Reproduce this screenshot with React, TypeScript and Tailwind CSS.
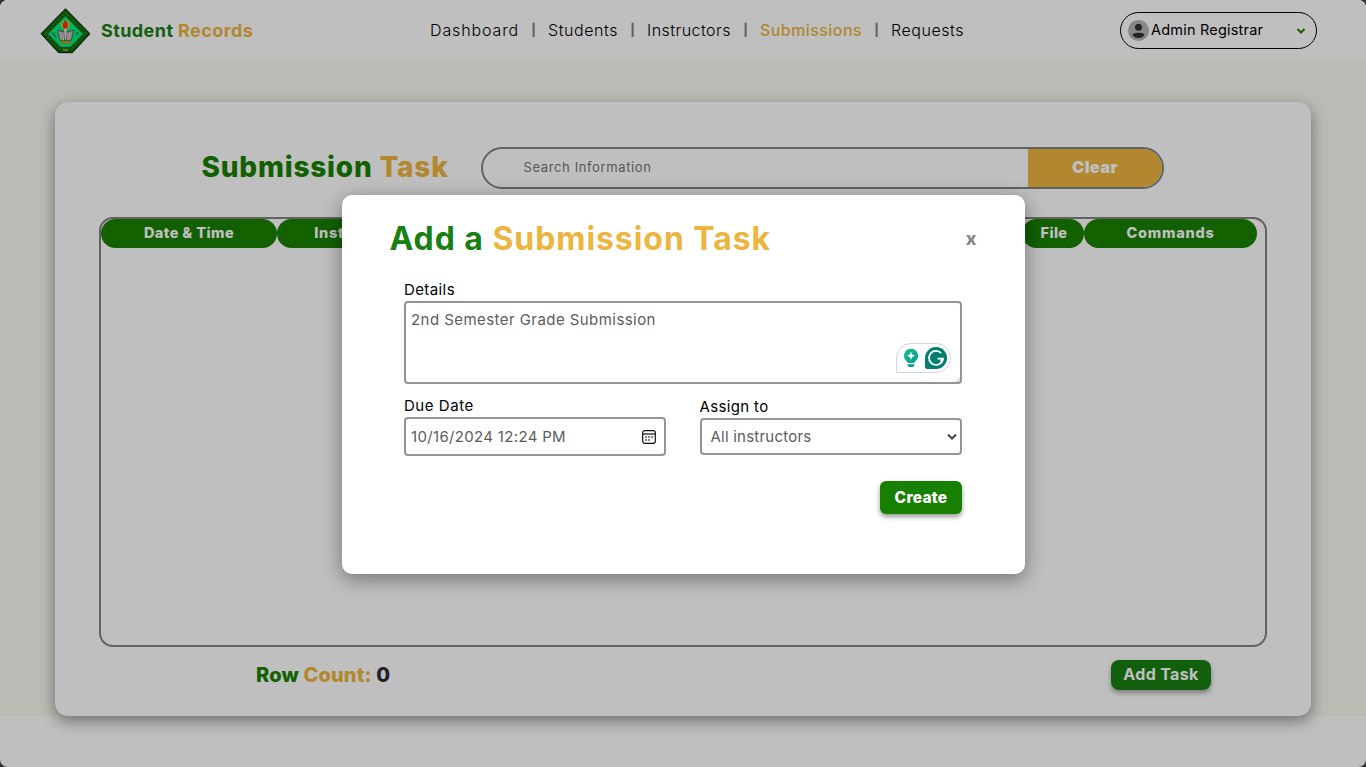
import React from "react";

function Logo() {
  return (
    <svg width="50" height="46" viewBox="-.5 -.2 50 46" className="shrink-0">
      <path d="M25 .5 49.5 25.500 32 44.500H18L.5 25.500Z" fill="#0a6b0a" stroke="#151515" strokeWidth="1" />
      <path d="M25 4.500 45.500 25.500 31 40.800H19L4.500 25.500Z" fill="none" stroke="#c8b400" strokeWidth="1.100" strokeDasharray="1.2 2.2" opacity=".5" />
      <path d="M25 7.500 43 25.700 29.800 39.200H20.200L7 25.700Z" fill="#00f07c" stroke="#2a4a3a" strokeWidth="1" />
      <path d="m17 22 7 2v9l-5-1.500ZM33 22l-7 2v9l5-1.500Z" fill="#d8d8cc" stroke="#3c3c3c" strokeWidth=".8" />
      <path d="M19.500 23v8M21.700 23.700v8M28.300 23.700v8M30.500 23v8" stroke="#777" strokeWidth=".6" />
      <path d="M23 20h4l-1 12h-2Z" fill="#d6d6d6" stroke="#555" strokeWidth=".5" />
      <circle cx="25" cy="16.500" r="4.500" fill="#f0c020" opacity=".85" />
      <path d="M25 12c2.500 2 3 5 1.800 8h-3.600C21.500 17 22.500 14 25 12Z" fill="#e8340c" />
      <path d="M19.500 32.200q5.500 2.400 11 0l-1 2.800h-9Z" fill="#e0a818" stroke="#7a5c00" strokeWidth=".4" />
      <path d="m11 24 5 6M12 27l2-3M14 29l1-3" stroke="#2c6a4a" strokeWidth=".9" fill="none" />
      <path d="m35 27 3-3M36 24l2 3" stroke="#2c6a4a" strokeWidth=".9" fill="none" />
      <path d="M22.500 42h5" stroke="#d6b820" strokeWidth="1.200" />
    </svg>
  );
}

function Separator() {
  return <span className="w-[29px] text-center text-[12px] font-extrabold text-[#858585]">|</span>;
}

function Header() {
  return (
    <header className="flex h-[61px] shrink-0 items-center bg-white pl-[40px] pr-[49px] leading-none">
      <div className="flex w-[390px] items-center gap-[11px] pt-px">
        <Logo />
        <span className="whitespace-nowrap pb-px text-[18px] font-bold tracking-[0.42px] text-[#188012]">
          Student <span className="text-[#ecb53f]">Records</span>
        </span>
      </div>
      <nav className="flex items-center whitespace-nowrap pb-[2px] text-[16px] font-light text-black">
        <span className="w-[89px] tracking-[0.87px]">Dashboard</span>
        <Separator />
        <span className="w-[70px] tracking-[0.56px]">Students</span>
        <Separator />
        <span className="w-[84px] tracking-[0.46px]">Instructors</span>
        <Separator />
        <span className="w-[102px] font-medium tracking-[0.43px] text-[#ecb53f]">Submissions</span>
        <Separator />
        <span className="w-[73px] tracking-[0.54px]">Requests</span>
      </nav>
      <div className="ml-auto flex h-[37px] w-[197px] items-center rounded-full border border-black pl-[7px] pr-[10px]">
        <svg width="21" height="21" viewBox="0 0 21 21">
          <circle cx="10.500" cy="10.500" r="10.500" fill="#b4b4b4" />
          <circle cx="10.500" cy="7.300" r="3.500" fill="#333" />
          <path d="M4.700 15c0-3 11.600-3 11.600 0-.8 1.800-3 3-5.800 3s-5-1.200-5.800-3Z" fill="#333" />
        </svg>
        <span className="ml-[2px] text-[14.5px] tracking-[0.2px] text-black">Admin Registrar</span>
        <svg width="10" height="8" viewBox="0 0 10 8" className="ml-auto">
          <path d="m1.500 2 3.500 3.500L8.500 2" fill="none" stroke="#188000" strokeWidth="2" />
        </svg>
      </div>
    </header>
  );
}

function SearchBar() {
  return (
    <div className="flex h-[42px] w-[683px] overflow-hidden rounded-full border-2 border-[#838383] bg-white">
      <div className="flex flex-1 items-center pb-[2px] pl-[40.5px] text-[13px] tracking-[0.62px] text-[#757575]">
        Search Information
      </div>
      <div className="flex w-[134px] items-center justify-center bg-[#ecb53f] pb-[2px] text-[16.5px] font-black tracking-[0.3px] text-white">
        Clear
      </div>
    </div>
  );
}

const columns = [
  { label: "Date & Time", className: "w-[176px] tracking-[0.42px]" },
  { label: "Instructor", className: "w-[154px] pr-[1px] tracking-[0.7px]" },
  { label: "", className: "flex-1" },
  { label: "File", className: "w-[62px] pl-[2px] tracking-[0.35px]" },
  { label: "Commands", className: "w-[173px] tracking-[0.75px]" },
];

function TaskCard() {
  return (
    <section className="flex h-[614px] flex-col rounded-[13px] bg-white px-[44px] pt-[45px] leading-none shadow-[0_5px_15px_rgba(0,0,0,0.42)]">
      <div className="flex items-center pl-[102px]">
        <h1 className="w-[280px] whitespace-nowrap pb-[2px] pl-[0.5px] text-[28px] font-extrabold tracking-[0.78px] text-[#188000]">
          Submission <span className="text-[#ecb53f]">Task</span>
        </h1>
        <SearchBar />
      </div>
      <div className="mt-[28px] h-[430px] rounded-[14px] border-2 border-[#838383] pr-[8px]">
        <div className="flex h-[29px] text-[14.5px] font-extrabold text-white">
          {columns.map((c, i) => (
            <div key={i} className={`flex items-center justify-center rounded-full bg-[#188000] pb-[0.5px] ${c.className}`}>
              {c.label}
            </div>
          ))}
        </div>
      </div>
      <div className="mt-[13px] flex items-center justify-between pl-[157px] pr-[56px]">
        <p className="text-[20px] font-extrabold tracking-[0.15px] text-[#2b2b33]">
          <span className="text-[#188000]">Row</span> <span className="text-[#ecb53f]">Count:</span> 0
        </p>
        <button className="h-[30px] w-[100px] rounded-[8px] bg-[#198012] pb-[2px] text-[16px] font-bold tracking-[0.35px] text-white shadow-[0_3px_5px_rgba(0,0,0,0.35)]">
          Add Task
        </button>
      </div>
    </section>
  );
}

function WritingAssistant() {
  return (
    <div className="absolute bottom-[9px] right-[9px] flex h-[30px] w-[55px] items-center rounded-[15px] rounded-bl-none border border-[#d3d3e2] bg-white pl-[6px]">
      <svg width="16" height="20" viewBox="0 0 15 20">
        <defs>
          <linearGradient id="bulb" x1="0" y1="0" x2="1" y2="1">
            <stop offset="0" stopColor="#17c192" />
            <stop offset="1" stopColor="#009c90" />
          </linearGradient>
        </defs>
        <path d="M7.500.800a7 7 0 0 1 4.200 12.600c-.7.600-.9 1-1.100 1.600H4.400c-.2-.6-.4-1-1.100-1.600A7 7 0 0 1 7.500.800Z" fill="url(#bulb)" />
        <path d="M7.500 3.800 8.700 6.600 11.500 7.800 8.700 9 7.500 11.800 6.300 9 3.500 7.800 6.300 6.600Z" fill="#fff" />
        <path d="M4 16.300h7c0 1.800-1 2.700-2.300 2.700H6.300C5 19 4 18.100 4 16.300Z" fill="#009c90" />
      </svg>
      <svg width="22" height="22" viewBox="0 0 22 22" className="ml-[6px]">
        <path d="M11 0A11 11 0 1 1 11 22H2.500A2.500 2.500 0 0 1 0 19.500V11A11 11 0 0 1 11 0Z" fill="#027e6f" />
        <path d="M16.200 6.200A7 7 0 1 0 18 11.600h-5.500M17.800 11.600l-2.300 2.600" fill="none" stroke="#fff" strokeWidth="1.800" />
      </svg>
    </div>
  );
}

function CalendarIcon() {
  return (
    <svg width="14" height="14" viewBox="0 0 14 14">
      <rect x=".7" y=".7" width="12.600" height="12.600" rx="2" fill="none" stroke="#111" strokeWidth="1.200" />
      <path d="M.7 4h12.600" stroke="#111" strokeWidth="1.200" />
      <path d="M6.300 7h1.400M9.300 7h1.400M3.300 7h1.400M3.300 10h1.400M6.300 10h1.400" stroke="#111" strokeWidth="1.500" />
    </svg>
  );
}

function TaskModal() {
  return (
    <div className="flex h-[379px] w-[683px] flex-col rounded-[10px] bg-white pl-[48px] pr-[63px] leading-none shadow-[0_5px_20px_rgba(0,0,0,0.4)]">
      <div className="-mr-[15px] flex h-[86px] items-center justify-between pt-[2px]">
        <h2 className="whitespace-nowrap text-[32px] font-bold tracking-[0.94px] text-[#188012]">
          Add a <span className="text-[#ecb53f]">Submission Task</span>
        </h2>
        <button className="text-[18px] font-extrabold text-[#888]">x</button>
      </div>
      <div className="flex flex-col pl-[14px] text-[15px]">
        <label className="flex h-[20px] items-start pl-[0.5px] pt-[1px] tracking-[0.4px] text-black">Details</label>
        <div className="relative h-[83px] rounded-[4px] border-2 border-[#949494] pl-[5.500px] pt-[9px] tracking-[0.44px] text-[#5c5c5c]">
          2nd Semester Grade Submission
          <WritingAssistant />
          <svg width="4" height="4" viewBox="0 0 5 5" className="absolute bottom-0 right-0">
            <path d="M0 5 5 0M3 5l2-2" stroke="#999" strokeWidth=".7" />
          </svg>
        </div>
        <div className="flex justify-between pt-[13px]">
          <div className="flex w-[262px] flex-col">
            <label className="flex h-[20px] items-center pb-[3px] pl-[0.5px] tracking-[0.54px] text-black">Due Date</label>
            <div className="flex h-[39px] items-center justify-between rounded-[4px] border-2 border-[#949494] pl-[5.500px] pr-[8px] tracking-[0.33px] text-[#5c5c5c]">
              <span>10/16/2024 12:24 PM</span>
              <CalendarIcon />
            </div>
          </div>
          <div className="flex w-[262px] flex-col">
            <label className="flex h-[21px] items-center pb-[2px] tracking-[0.35px] text-black">Assign to</label>
            <div className="flex h-[37px] items-center justify-between rounded-[4px] border-2 border-[#949494] pl-[9px] pr-[3px] tracking-[0.23px] text-[#5c5c5c]">
              <span>All instructors</span>
              <svg width="10" height="8" viewBox="0 0 10 8">
                <path d="m1 1.500 4 4 4-4" fill="none" stroke="#444" strokeWidth="2" />
              </svg>
            </div>
          </div>
        </div>
        <button className="ml-auto mt-[25px] h-[33px] w-[82px] rounded-[6px] bg-[#188000] pl-[1px] text-[15.5px] font-extrabold tracking-[0.25px] text-white shadow-[0_3px_5px_rgba(0,0,0,0.4)]">
          Create
        </button>
      </div>
    </div>
  );
}

export default function App() {
  return (
    <div className="h-[767px] w-full bg-[#333] font-['Inter',sans-serif]">
      <div className="relative flex h-full flex-col overflow-hidden rounded-[8px] bg-white">
        <Header />
        <main className="h-[655px] shrink-0 bg-[#f9faf2] px-[55px] pt-[41px]">
          <TaskCard />
        </main>
        <div className="absolute inset-0 flex items-start justify-center bg-black/25 pt-[195px]">
          <TaskModal />
        </div>
      </div>
    </div>
  );
}
